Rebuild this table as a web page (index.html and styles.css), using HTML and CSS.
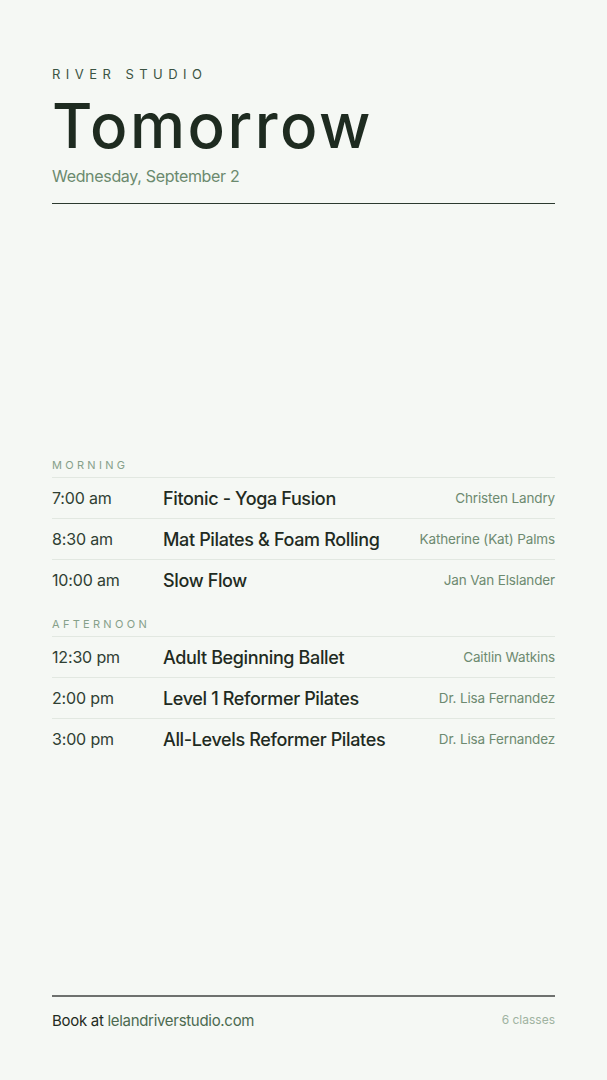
FILE: index.html
```html
<!DOCTYPE html>
<html lang="en">
<head>
    <meta charset="UTF-8">
    <meta name="viewport" content="width=device-width, initial-scale=1.0">
    <title>River Studio - Tomorrow</title>
    <link rel="stylesheet" href="styles.css">
</head>
<body>
    <div class="page">
        <header class="header">
            <div class="studio">RIVER STUDIO</div>
            <h1>Tomorrow</h1>
            <div class="date">Wednesday, September 2</div>
        </header>

        <main class="schedule">
            <section class="period">
                <h2>MORNING</h2>
                <div class="row">
                    <span class="time">7:00 am</span>
                    <span class="name">Fitonic - Yoga Fusion</span>
                    <span class="teacher">Christen Landry</span>
                </div>
                <div class="row">
                    <span class="time">8:30 am</span>
                    <span class="name">Mat Pilates &amp; Foam Rolling</span>
                    <span class="teacher">Katherine (Kat) Palms</span>
                </div>
                <div class="row">
                    <span class="time">10:00 am</span>
                    <span class="name">Slow Flow</span>
                    <span class="teacher">Jan Van Elslander</span>
                </div>
            </section>
            <section class="period">
                <h2>AFTERNOON</h2>
                <div class="row">
                    <span class="time">12:30 pm</span>
                    <span class="name">Adult Beginning Ballet</span>
                    <span class="teacher">Caitlin Watkins</span>
                </div>
                <div class="row">
                    <span class="time">2:00 pm</span>
                    <span class="name">Level 1 Reformer Pilates</span>
                    <span class="teacher">Dr. Lisa Fernandez</span>
                </div>
                <div class="row">
                    <span class="time">3:00 pm</span>
                    <span class="name">All-Levels Reformer Pilates</span>
                    <span class="teacher">Dr. Lisa Fernandez</span>
                </div>
            </section>
        </main>

        <footer class="footer">
            <div class="book">Book at <span class="url">lelandriverstudio.com</span></div>
            <div class="count">6 classes</div>
        </footer>
    </div>
</body>
</html>
```

FILE: styles.css
```css
body {
    margin: 0;
    padding: 0;
    background-color: #f5f8f4;
    font-family: Inter, "Liberation Sans", Arial, sans-serif;
    color: #1f2b22;
}
.page {
    height: 1080px;
    box-sizing: border-box;
    padding: 66px 52px 0;
    display: flex;
    flex-direction: column;
}
.studio {
    font-size: 13px;
    letter-spacing: 0.42em;
    color: #3b5443;
    line-height: 16px;
}
h1 {
    margin: 12px 0 0;
    font-size: 62px;
    font-weight: 500;
    line-height: 64px;
    letter-spacing: 0.04em;
    color: #1e2b20;
}
.date {
    margin-top: 8px;
    font-size: 16px;
    color: #6b8a6e;
    line-height: 20px;
    letter-spacing: -0.02em;
    padding-bottom: 17px;
    border-bottom: 1px solid #2c3a2f;
}
.schedule {
    flex: 1;
    display: flex;
    flex-direction: column;
    justify-content: center;
    gap: 17px;
    padding-top: 18px;
}
.period h2 {
    margin: 0;
    font-size: 11px;
    font-weight: 400;
    letter-spacing: 0.3em;
    color: #86a08a;
    line-height: 14px;
    padding-bottom: 5px;
    border-bottom: 1px solid #e2e8e1;
}
.row {
    display: flex;
    align-items: center;
    height: 40px;
    border-bottom: 1px solid #e2e8e1;
}
.row:last-child {
    border-bottom: none;
}
.time {
    width: 111px;
    font-size: 16px;
    color: #2f4033;
    letter-spacing: -0.01em;
}
.name {
    flex: 1;
    font-size: 18px;
    font-weight: 500;
    color: #1f2b22;
    letter-spacing: -0.02em;
}
.teacher {
    font-size: 13.5px;
    color: #6d8a70;
    letter-spacing: -0.01em;
}
.footer {
    border-top: 2px solid #6e716e;
    height: 85px;
    display: flex;
    justify-content: space-between;
    align-items: flex-start;
    padding-top: 14px;
    box-sizing: border-box;
}
.book {
    font-size: 15px;
    color: #1f2b22;
    letter-spacing: -0.02em;
}
.url {
    color: #4c6a50;
}
.count {
    font-size: 12px;
    color: #9fb3a1;
    padding-top: 1px;
}
```
